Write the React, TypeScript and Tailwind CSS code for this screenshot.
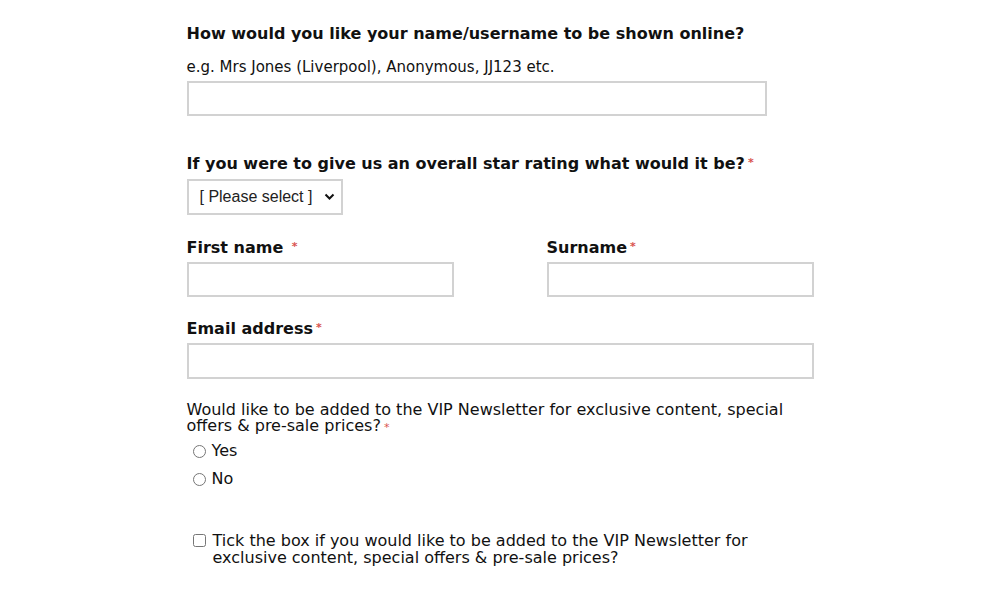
import { useState } from "react";

function Req() {
  return <span className="relative top-[-3px] ml-[3px] text-[11px] leading-none text-[#d9534f]">*</span>;
}

const inputClass = "block h-[35px] border-2 border-[#d2d2d2] bg-white px-2 text-[15px] outline-none";

export default function App() {
  const [rating, setRating] = useState("");

  return (
    <main className="min-h-screen bg-white font-['DejaVu_Sans',Verdana,sans-serif] text-[#111]">
      <form className="mx-auto w-[627px] pb-10 pt-[24px]" onSubmit={(e) => e.preventDefault()}>
        <p className="text-[16px] font-bold leading-5">How would you like your name/username to be shown online?</p>
        <p className="mt-[13px] text-[15px] leading-5">e.g. Mrs Jones (Liverpool), Anonymous, JJ123 etc.</p>
        <input className={`${inputClass} mt-[4px] w-[580px]`} type="text" />

        <p className="mt-[38px] text-[16px] font-bold leading-5">
          If you were to give us an overall star rating what would it be?
          <Req />
        </p>
        <div className="relative mt-[5px] w-[156px]">
          <select
            className="block h-[36px] w-full appearance-none border-2 border-[#d2d2d2] bg-white pl-[11px] font-['Liberation_Sans',Arial,sans-serif] text-[16px] text-[#222] outline-none"
            value={rating}
            onChange={(e) => setRating(e.target.value)}
          >
            <option value="">[ Please select ]</option>
            <option value="5">5 stars</option>
            <option value="4">4 stars</option>
            <option value="3">3 stars</option>
            <option value="2">2 stars</option>
            <option value="1">1 star</option>
          </select>
          <svg className="pointer-events-none absolute right-[8px] top-[14px]" width="11" height="8" viewBox="0 0 11 8" fill="none">
            <path d="M1.5 1.5 5.5 5.5 9.5 1.5" stroke="#111" strokeWidth="2" />
          </svg>
        </div>

        <div className="mt-[23px] grid grid-cols-[360px_1fr]">
          <div>
            <p className="text-[16px] font-bold leading-5">
              First name <Req />
            </p>
            <input className={`${inputClass} mt-[4px] w-[267px]`} type="text" />
          </div>
          <div>
            <p className="text-[16px] font-bold leading-5">
              Surname
              <Req />
            </p>
            <input className={`${inputClass} mt-[4px] w-[267px]`} type="text" />
          </div>
        </div>

        <p className="mt-[22px] text-[16px] font-bold leading-5">
          Email address
          <Req />
        </p>
        <input className={`${inputClass} mt-[4px] h-[36px] w-full`} type="email" />

        <p className="mt-[23px] w-[600px] text-[16px] leading-4">
          Would like to be added to the VIP Newsletter for exclusive content, special offers &amp; pre-sale prices?
          <span className="ml-[3px] text-[11px] leading-none text-[#d9534f]">*</span>
        </p>
        <label className="mt-[7px] flex h-5 items-center gap-[6px] pl-[6px] text-[16px]">
          <input className="m-0 h-[13px] w-[13px]" type="radio" name="vip" />
          Yes
        </label>
        <label className="mt-[8px] flex h-5 items-center gap-[6px] pl-[6px] text-[16px]">
          <input className="m-0 h-[13px] w-[13px]" type="radio" name="vip" />
          No
        </label>

        <label className="mt-[43px] flex items-start gap-[7px] pl-[6px] text-[16px] leading-[17px]">
          <input className="m-0 mt-[2px] h-[13px] w-[13px] shrink-0" type="checkbox" />
          <span className="w-[570px]">
            Tick the box if you would like to be added to the VIP Newsletter for exclusive content, special offers &amp; pre-sale prices?
          </span>
        </label>
      </form>
    </main>
  );
}
